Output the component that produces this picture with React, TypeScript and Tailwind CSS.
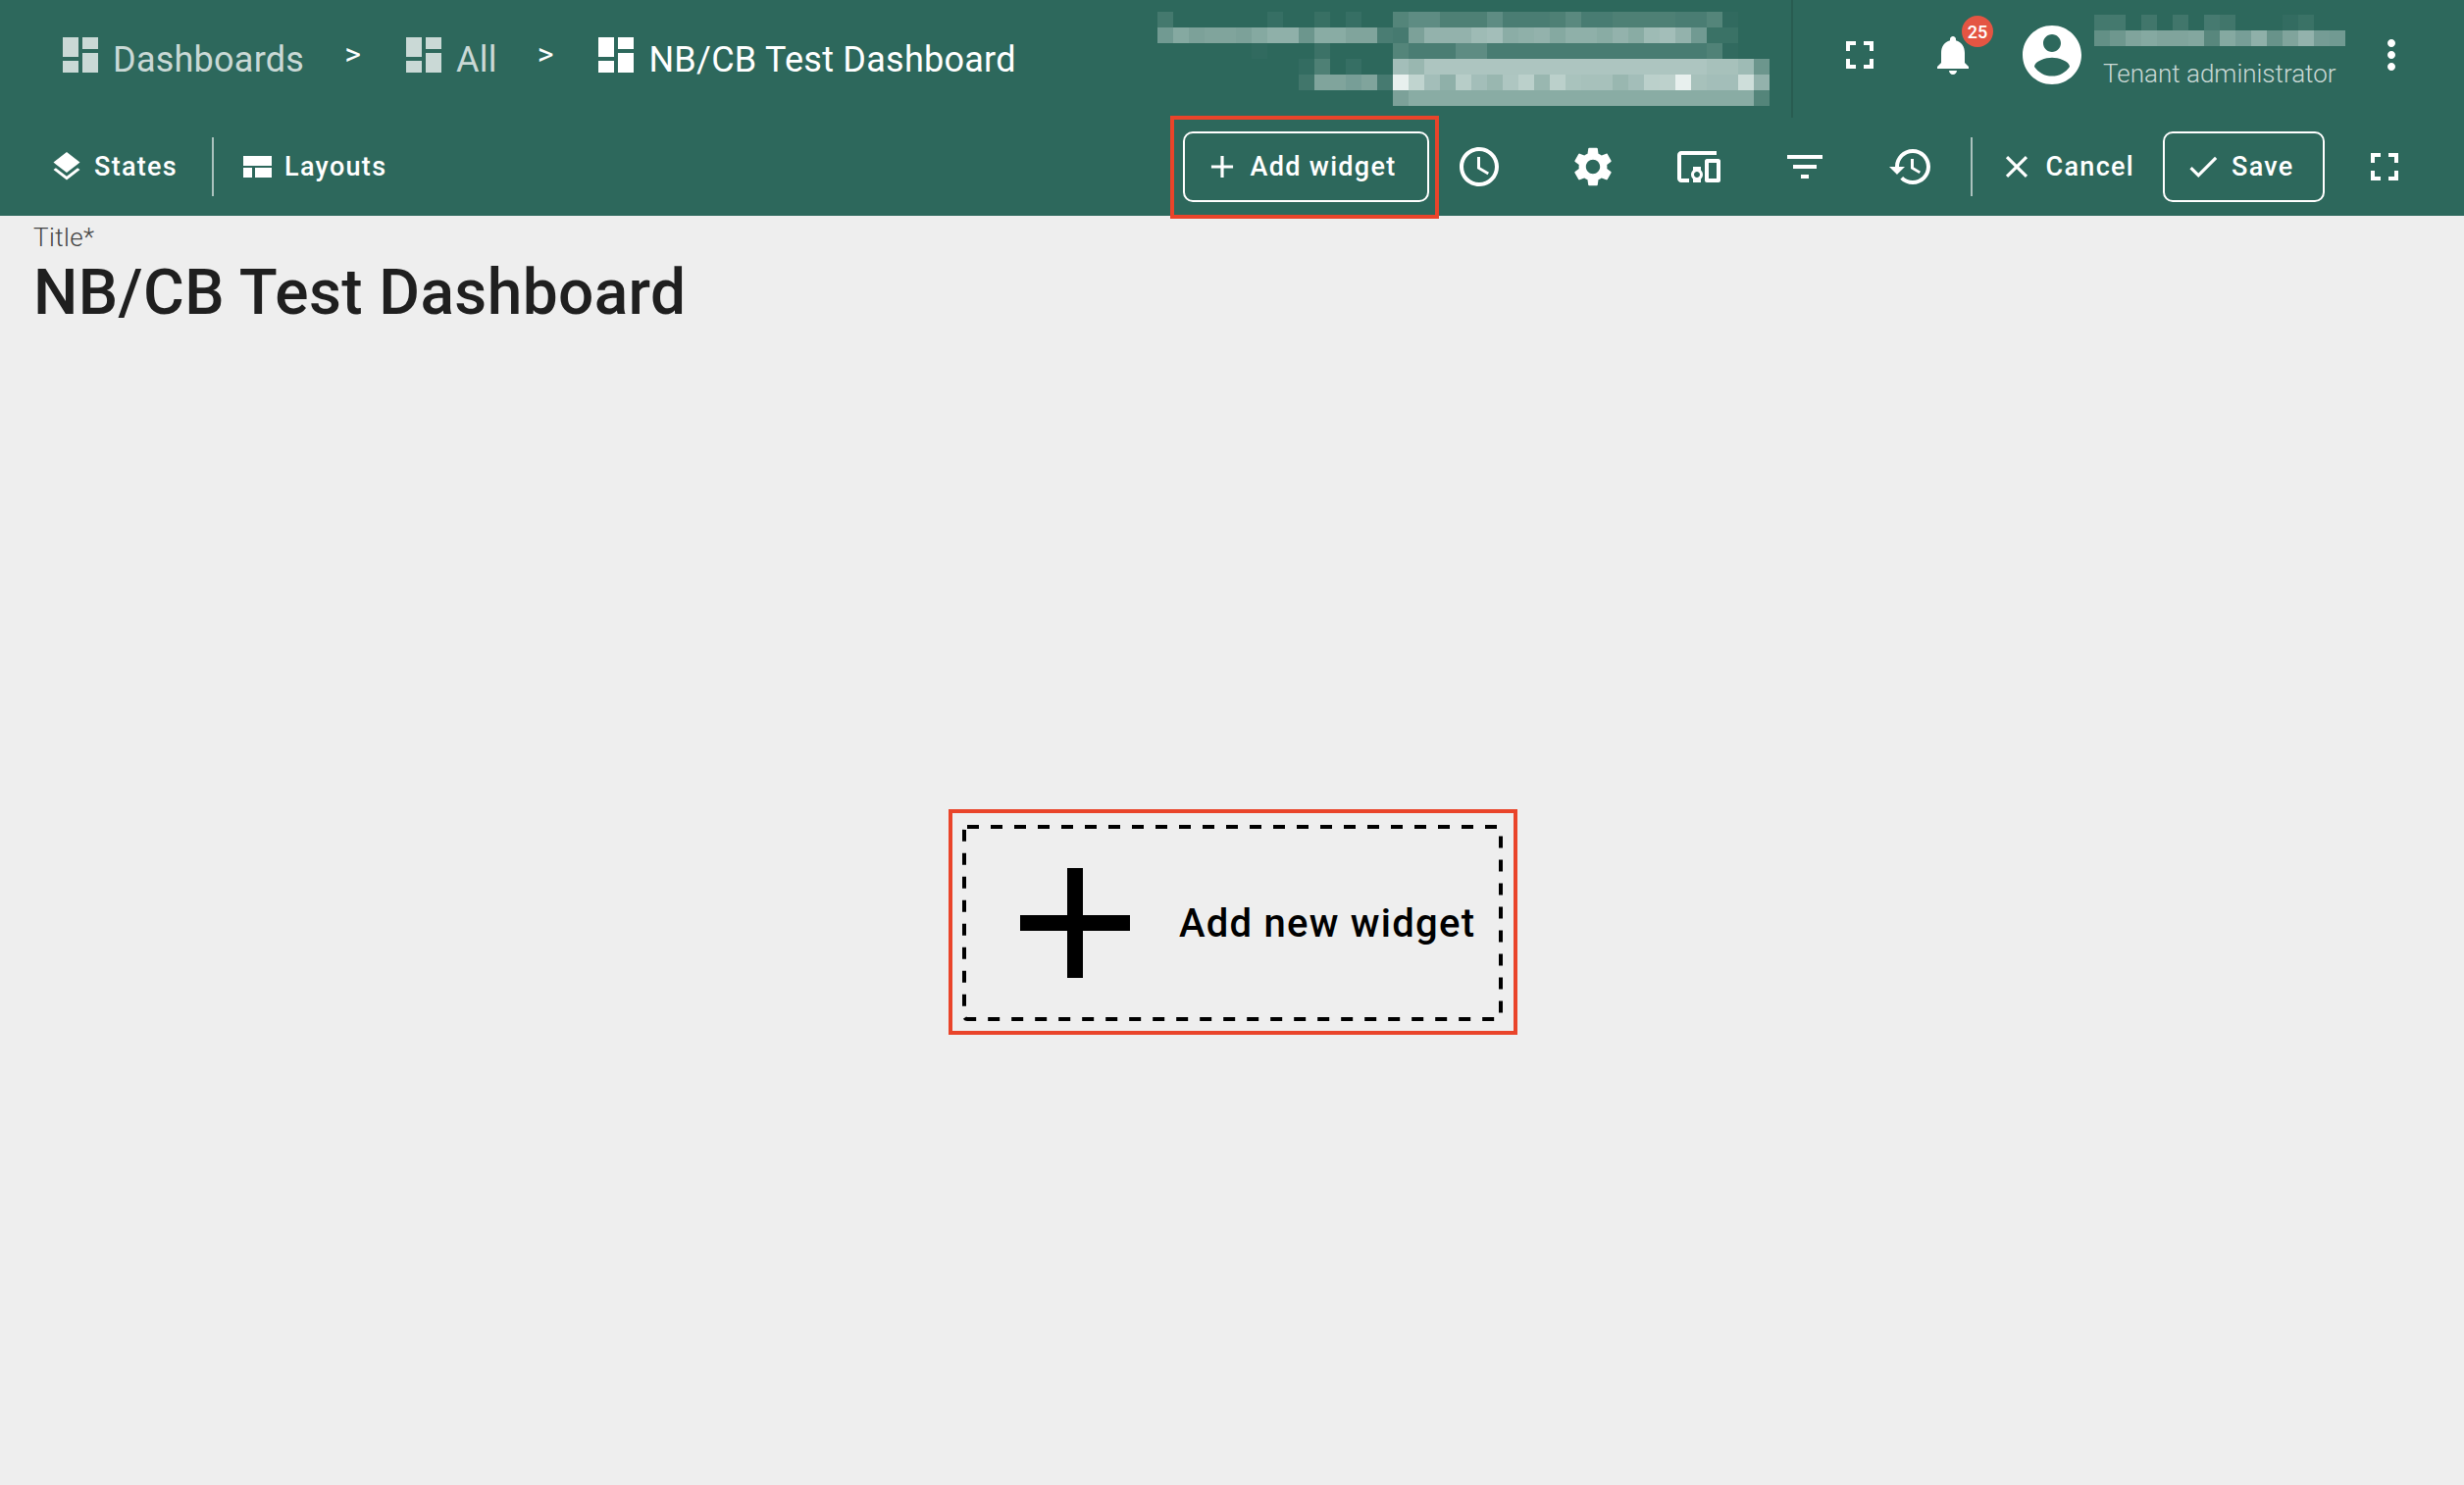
import React from 'react';

const P = {
  dashboard: 'M3 13h8V3H3v10zm0 8h8v-6H3v6zm10 0h8V11h-8v10zm0-18v6h8V3h-8z',
  layers: 'M11.99 18.54l-7.37-5.73L3 14.07l9 7 9-7-1.63-1.27-7.38 5.74zM12 16l7.36-5.73L21 9l-9-7-9 7 1.63 1.27L12 16z',
  add: 'M19 13h-6v6h-2v-6H5v-2h6V5h2v6h6v2z',
  schedule: 'M11.99 2C6.47 2 2 6.48 2 12s4.47 10 9.99 10C17.52 22 22 17.52 22 12S17.52 2 11.99 2zM12 20c-4.42 0-8-3.58-8-8s3.58-8 8-8 8 3.58 8 8-3.58 8-8 8zm.5-13H11v6l5.25 3.15.75-1.23-4.5-2.67z',
  settings: 'M19.14 12.94c.04-.3.06-.61.06-.94 0-.32-.02-.64-.07-.94l2.03-1.58c.18-.14.23-.41.12-.61l-1.92-3.32c-.12-.22-.37-.29-.59-.22l-2.39.96c-.5-.38-1.03-.7-1.62-.94l-.36-2.54c-.04-.24-.24-.41-.48-.41h-3.84c-.24 0-.43.17-.47.41l-.36 2.54c-.59.24-1.13.57-1.62.94l-2.39-.96c-.22-.08-.47 0-.59.22L2.74 8.87c-.12.21-.08.47.12.61l2.03 1.58c-.05.3-.09.63-.09.94s.02.64.07.94l-2.03 1.58c-.18.14-.23.41-.12.61l1.92 3.32c.12.22.37.29.59.22l2.39-.96c.5.38 1.03.7 1.62.94l.36 2.54c.05.24.24.41.48.41h3.84c.24 0 .44-.17.47-.41l.36-2.54c.59-.24 1.13-.56 1.62-.94l2.39.96c.22.08.47 0 .59-.22l1.92-3.32c.12-.22.07-.47-.12-.61l-2.01-1.58zM12 15.6c-1.98 0-3.6-1.62-3.6-3.6s1.62-3.6 3.6-3.6 3.6 1.62 3.6 3.6-1.62 3.6-3.6 3.6z',
  devices: 'M3 6h18V4H3c-1.1 0-2 .9-2 2v12c0 1.1.9 2 2 2h4v-2H3V6zm10 6H9v1.78c-.61.55-1 1.33-1 2.22s.39 1.67 1 2.22V20h4v-1.78c.61-.55 1-1.34 1-2.22s-.39-1.67-1-2.22V12zm-2 5.5c-.83 0-1.5-.67-1.5-1.5s.67-1.5 1.5-1.5 1.5.67 1.5 1.5-.67 1.5-1.5 1.5zM22 8h-6c-.5 0-1 .5-1 1v10c0 .5.5 1 1 1h6c.5 0 1-.5 1-1V9c0-.5-.5-1-1-1zm-1 10h-4v-8h4v8z',
  filter: 'M10 18h4v-2h-4v2zM3 6v2h18V6H3zm3 7h12v-2H6v2z',
  history: 'M13 3c-4.97 0-9 4.03-9 9H1l3.89 3.89.07.14L9 12H6c0-3.87 3.13-7 7-7s7 3.13 7 7-3.13 7-7 7c-1.93 0-3.68-.79-4.94-2.06l-1.42 1.42C8.27 19.99 10.51 21 13 21c4.97 0 9-4.03 9-9s-4.03-9-9-9zm-1 5v5l4.28 2.54.72-1.21-3.5-2.08V8H12z',
  close: 'M19 6.41L17.59 5 12 10.59 6.41 5 5 6.41 10.59 12 5 17.59 6.41 19 12 13.41 17.59 19 19 17.59 13.41 12z',
  check: 'M9 16.17L4.83 12l-1.42 1.41L9 19 21 7l-1.41-1.41z',
  fullscreen: 'M7 14H5v5h5v-2H7v-3zm-2-4h2V7h3V5H5v5zm12 7h-3v2h5v-5h-2v3zM14 5v2h3v3h2V5h-5z',
  bell: 'M12 22c1.1 0 2-.9 2-2h-4c0 1.1.89 2 2 2zm6-6v-5c0-3.07-1.64-5.64-4.5-6.32V4c0-.83-.67-1.5-1.5-1.5s-1.5.67-1.5 1.5v.68C7.63 5.36 6 7.92 6 11v5l-2 2v1h16v-1l-2-2z',
  account: 'M12 2C6.48 2 2 6.48 2 12s4.48 10 10 10 10-4.48 10-10S17.52 2 12 2zm0 3c1.66 0 3 1.34 3 3s-1.34 3-3 3-3-1.34-3-3 1.34-3 3-3zm0 14.2c-2.5 0-4.71-1.28-6-3.22.03-1.99 4-3.08 6-3.08 1.99 0 5.97 1.09 6 3.08-1.29 1.94-3.5 3.22-6 3.22z',
  more: 'M12 8c1.1 0 2-.9 2-2s-.9-2-2-2-2 .9-2 2 .9 2 2 2zm0 2c-1.1 0-2 .9-2 2s.9 2 2 2 2-.9 2-2-.9-2-2-2zm0 6c-1.1 0-2 .9-2 2s.9 2 2 2 2-.9 2-2-.9-2-2-2z',
};

function Icon({ d, className }: { d: string; className: string }) {
  return (
    <svg viewBox="0 0 24 24" fill="currentColor" className={`shrink-0 ${className}`}>
      <path d={d} />
    </svg>
  );
}

// blurred-out account details, white cells at the given opacity
const blurTop = [
  [.12,0,0,0,0,0,0,.05,0,0,.06,0,.05,0,0,.2,.25,.25,.17,.17,.17,.25,.15,.15,.15,.17,.23,.14,.14,.17,.17,.17,.17,.15,.15,.2,.02,0,0],
  [.35,.45,.4,.42,.42,.4,.45,.5,.5,.32,.47,.47,.42,.42,.15,.13,.4,.52,.52,.52,.58,.6,.48,.5,.52,.45,.5,.5,.47,.52,.47,.58,.6,.52,.35,.07,.07,0,0],
  [0,0,0,0,0,0,.02,0,0,0,.08,0,0,0,0,.2,.15,.15,.15,.25,.25,.14,.14,.14,.14,.14,.14,.14,.14,.14,.14,.14,.14,.14,.14,.18,.02,0,0],
  [0,0,0,0,0,0,0,0,0,.03,.17,0,.05,0,0,.6,.55,.65,.65,.65,.65,.65,.65,.65,.65,.65,.65,.65,.65,.65,.65,.65,.65,.65,.65,.62,.62,.58,.32],
  [0,0,0,0,0,0,0,0,0,.1,.42,.42,.38,.42,.13,.95,.75,.6,.5,.7,.6,.55,.66,.72,.55,.72,.63,.62,.62,.55,.6,.72,.73,.95,.62,.6,.6,.82,.52],
  [0,0,0,0,0,0,0,0,0,0,0,0,0,0,0,.4,.47,.47,.47,.47,.47,.47,.47,.47,.47,.47,.47,.47,.47,.47,.47,.47,.47,.47,.47,.47,.47,.47,.2],
];
const blurUser = [
  [.12,.12,0,.1,0,.1,0,.13,.1,0,0,0,.03,.07,0,0],
  [.28,.33,.42,.45,.42,.42,.44,.22,.45,.38,.5,.3,.42,.52,.37,.35],
];

function Mosaic({ rows, className }: { rows: number[][]; className: string }) {
  return (
    <svg viewBox={`0 0 ${rows[0].length * 16} ${rows.length * 16}`} shapeRendering="crispEdges" className={`block shrink-0 ${className}`}>
      {rows.map((row, y) =>
        row.map((a, x) => a > 0 && <rect key={`${x}-${y}`} x={x * 16} y={y * 16} width="16" height="16" fill="#f2f8f6" fillOpacity={a} />)
      )}
    </svg>
  );
}

function Crumb({ label, dim, chevron }: { label: string; dim?: boolean; chevron?: boolean }) {
  return (
    <div className={`flex items-center ${dim ? 'text-white/75' : 'text-white'}`}>
      <Icon d={P.dashboard} className="w-[48px] h-[48px]" />
      <span className="ml-[9px] mt-[10px] text-[36px] leading-none tracking-[.25px]">{label}</span>
      {chevron && <span className="ml-[41px] mr-[40px] -mt-[3px] text-[32px] leading-none text-white">&gt;</span>}
    </div>
  );
}

export default function App() {
  return (
    <div className="flex flex-col w-full h-[1514px] overflow-hidden bg-[#eeeeee] font-['Roboto',sans-serif]">
      <header className="relative z-10 shrink-0 h-[220px] bg-[#2d685c] text-white">
        <div className="flex items-center h-[120px] pr-[50px]">
          <div className="flex items-center pb-2 pl-[58px]">
            <Crumb label="Dashboards" dim chevron />
            <Crumb label="All" dim chevron />
            <Crumb label="NB/CB Test Dashboard" />
          </div>
          <Mosaic rows={blurTop} className="ml-auto w-[624px] h-[96px]" />
          <div className="ml-[22px] w-[2px] self-stretch bg-[#285c51]" />
          <div className="flex items-center pb-2">
            <Icon d={P.fullscreen} className="ml-[44px] w-[48px] h-[48px]" />
            <div className="relative ml-[47px]">
              <Icon d={P.bell} className="w-[48px] h-[48px]" />
              <span className="absolute left-[33px] -top-[16px] flex items-center justify-center w-[32px] h-[32px] rounded-full bg-[#e45543] text-[18px] font-medium">25</span>
            </div>
            <Icon d={P.account} className="ml-[41px] w-[72px] h-[72px]" />
          </div>
          <div className="ml-[7px] self-start pt-[15px] w-[256px]">
            <Mosaic rows={blurUser} className="w-[256px] h-[32px]" />
            <p className="ml-[9px] mt-[13px] text-[26px] leading-[30px] font-light text-white/75 whitespace-nowrap">Tenant administrator</p>
          </div>
          <div className="flex items-center pb-2">
            <Icon d={P.more} className="ml-[23px] w-[48px] h-[48px]" />
          </div>
        </div>

        <div className="flex items-center h-[100px] pr-[57px]">
          <Icon d={P.layers} className="ml-[50px] w-[36px] h-[36px]" />
          <span className="ml-[10px] text-[27px] font-medium tracking-[1.3px]">States</span>
          <div className="ml-[35px] w-[2px] h-[60px] bg-white/60" />
          <svg viewBox="0 0 29 22" fill="currentColor" className="ml-[30px] w-[29px] h-[22px]">
            <rect width="29" height="10" />
            <rect y="12" width="9" height="10" />
            <rect x="12" y="12" width="17" height="10" />
          </svg>
          <span className="ml-[13px] text-[27px] font-medium tracking-[1.3px]">Layouts</span>

          <div className="ml-auto relative">
            <button className="flex items-center w-[251px] h-[72px] pl-[19px] border-2 border-white rounded-[10px] text-[27px] font-medium tracking-[1.3px]">
              <Icon d={P.add} className="w-[38px] h-[38px]" />
              <span className="ml-[10px]">Add widget</span>
            </button>
            <div className="absolute -left-[13px] -right-[10px] -top-[16px] -bottom-[17px] border-4 border-[#e9442a]" />
          </div>
          <Icon d={P.schedule} className="ml-[27px] w-[48px] h-[48px]" />
          <Icon d={P.settings} className="ml-[68px] w-[48px] h-[48px]" />
          <Icon d={P.devices} className="ml-[60px] w-[48px] h-[48px]" />
          <Icon d={P.filter} className="ml-[60px] w-[48px] h-[48px]" />
          <Icon d={P.history} className="ml-[60px] w-[48px] h-[48px]" />
          <div className="ml-[37px] w-[2px] h-[60px] bg-white/60" />
          <Icon d={P.close} className="ml-[26px] w-[38px] h-[38px]" />
          <span className="ml-[11px] text-[27px] font-medium tracking-[1.3px]">Cancel</span>
          <button className="flex items-center ml-[29px] w-[165px] h-[72px] pl-[20px] border-2 border-white rounded-[10px] text-[27px] font-medium tracking-[1.3px]">
            <Icon d={P.check} className="w-[38px] h-[38px]" />
            <span className="ml-[10px]">Save</span>
          </button>
          <Icon d={P.fullscreen} className="ml-[37px] w-[48px] h-[48px]" />
        </div>
      </header>

      <section className="shrink-0 h-[146px] pl-[34px] pt-[8px]">
        <p className="text-[26px] leading-[28px] font-light tracking-[.4px] text-[#444444]">Title*</p>
        <h1 className="mt-[5px] text-[64px] leading-[76px] font-medium tracking-[.4px] text-[#1f1f1f]">NB/CB Test Dashboard</h1>
      </section>

      <main className="flex-1 flex items-center justify-center pl-[2px]">
        <div className="w-[580px] h-[230px] border-4 border-[#e9442a] pl-[10px] pr-[11px] pt-[12px] pb-[10px]">
          <div className="relative flex items-center w-full h-full">
            <svg className="absolute inset-0 w-full h-full" fill="none">
              <rect x="2" y="2" width="calc(100% - 4px)" height="calc(100% - 4px)" rx="3" stroke="#000" strokeWidth="4" strokeDasharray="12 12" />
            </svg>
            <Icon d={P.add} className="ml-[19px] w-[192px] h-[192px] text-black" />
            <span className="ml-[10px] mt-[2px] text-[40px] font-medium tracking-[1.25px] text-black whitespace-nowrap">Add new widget</span>
          </div>
        </div>
      </main>
    </div>
  );
}
